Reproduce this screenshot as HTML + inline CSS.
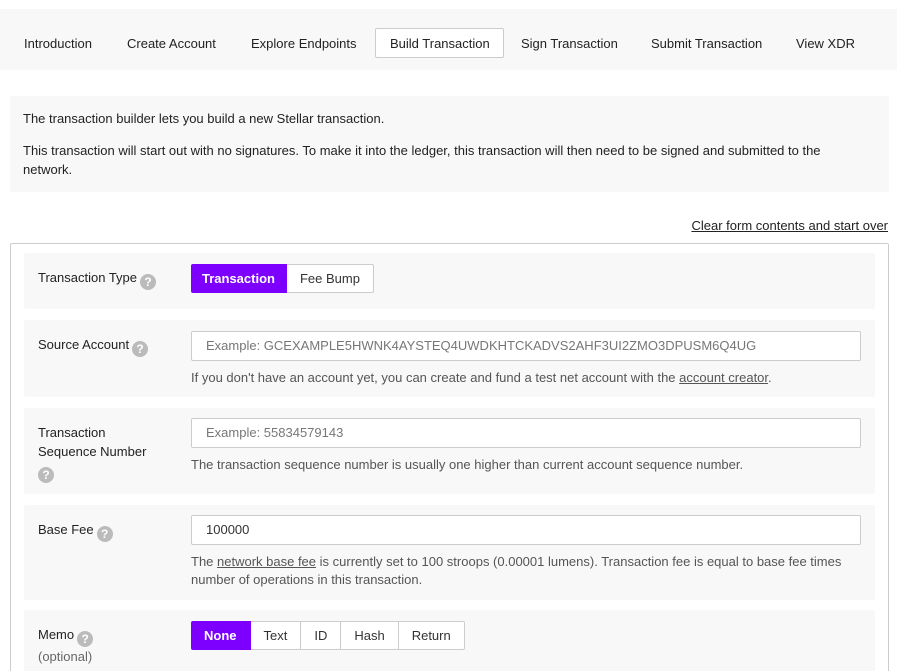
<!DOCTYPE html>
<html style="width:897px;height:671px;overflow:hidden"><head><meta charset="utf-8">
<style>
*{box-sizing:border-box;margin:0;padding:0}
body{width:897px;height:671px;overflow:hidden;background:#fff;font-family:"Liberation Sans",sans-serif;font-size:13px;color:#222;position:relative}
.abs{position:absolute}
.nav{left:0;top:9px;width:897px;height:61px;background:#f8f8f8}
.tab{position:absolute;top:36px;font-size:13px;color:#222;white-space:nowrap}
.tabsel{position:absolute;left:375px;top:28px;width:129px;height:30px;border:1px solid #ccc;border-radius:2px;background:#fff}
.info{left:10px;top:96px;width:879px;height:96px;background:#f8f8f8;border-radius:2px}
.info p{position:absolute;left:13px;width:830px;line-height:19px}
.clear{right:9px;top:218px;text-decoration:underline;color:#222}
.form{left:10px;top:243px;width:879px;height:440px;border:1px solid #ccc;border-radius:2px}
.row{position:absolute;left:24px;width:851px;background:#f8f8f8;border-radius:2px}
.lbl{position:absolute;left:14px;line-height:19px}
.q{display:inline-block;width:16px;height:16px;border-radius:50%;background:#bbb;color:#fff;font-weight:bold;font-size:12px;text-align:center;line-height:16px;vertical-align:-4px;margin-left:3px}
.inp{position:absolute;left:167px;width:670px;height:30px;border:1px solid #ccc;border-radius:2px;background:#fff;padding-left:14px;line-height:28px;color:#777}
.help{position:absolute;left:167px;color:#555;line-height:18px;width:680px}
.u{text-decoration:underline}
.bg{position:absolute;left:167px;display:flex;height:29px}
.bg span{border:1px solid #ccc;border-left:none;background:#fff;padding:0 13px;line-height:27px;color:#333}
.bg span.on{background:#7d00ff;color:#fff;border-color:#7d00ff;font-weight:600}
</style></head><body>
<div class="abs nav"></div>
<div class="tabsel"></div>
<span class="tab" style="left:24px">Introduction</span>
<span class="tab" style="left:127px">Create Account</span>
<span class="tab" style="left:251px">Explore Endpoints</span>
<span class="tab" style="left:390px">Build Transaction</span>
<span class="tab" style="left:521px">Sign Transaction</span>
<span class="tab" style="left:651px">Submit Transaction</span>
<span class="tab" style="left:796px">View XDR</span>

<div class="abs info">
<p style="top:13px">The transaction builder lets you build a new Stellar transaction.</p>
<p style="top:45px">This transaction will start out with no signatures. To make it into the ledger, this transaction will then need to be signed and submitted to the network.</p>
</div>
<div class="abs clear">Clear form contents and start over</div>
<div class="abs form"></div>

<div class="row" style="top:253px;height:56px">
<div class="lbl" style="top:15px">Transaction Type<span class="q">?</span></div>
<div class="bg" style="top:11px"><span class="on" style="border-radius:2px 0 0 2px;padding:0 11px">Transaction</span><span style="border-radius:0 2px 2px 0">Fee Bump</span></div>
</div>

<div class="row" style="top:320px;height:77px">
<div class="lbl" style="top:15px">Source Account<span class="q">?</span></div>
<div class="inp" style="top:11px">Example: GCEXAMPLE5HWNK4AYSTEQ4UWDKHTCKADVS2AHF3UI2ZMO3DPUSM6Q4UG</div>
<div class="help" style="top:49px">If you don't have an account yet, you can create and fund a test net account with the <span class="u">account creator</span>.</div>
</div>

<div class="row" style="top:408px;height:86px">
<div class="lbl" style="top:15px">Transaction<br>Sequence Number<br><span class="q" style="margin-left:0">?</span></div>
<div class="inp" style="top:10px">Example: 55834579143</div>
<div class="help" style="top:48px">The transaction sequence number is usually one higher than current account sequence number.</div>
</div>

<div class="row" style="top:505px;height:95px">
<div class="lbl" style="top:15px">Base Fee<span class="q">?</span></div>
<div class="inp" style="top:10px;color:#333">100000</div>
<div class="help" style="top:48px">The <span class="u">network base fee</span> is currently set to 100 stroops (0.00001 lumens). Transaction fee is equal to base fee times number of operations in this transaction.</div>
</div>

<div class="row" style="top:610px;height:80px">
<div class="lbl" style="top:15px">Memo<span class="q">?</span><br><span style="color:#666">(optional)</span></div>
<div class="bg" style="top:11px"><span class="on" style="border-radius:2px 0 0 2px">None</span><span>Text</span><span>ID</span><span>Hash</span><span style="border-radius:0 2px 2px 0">Return</span></div>
</div>
</body></html>
